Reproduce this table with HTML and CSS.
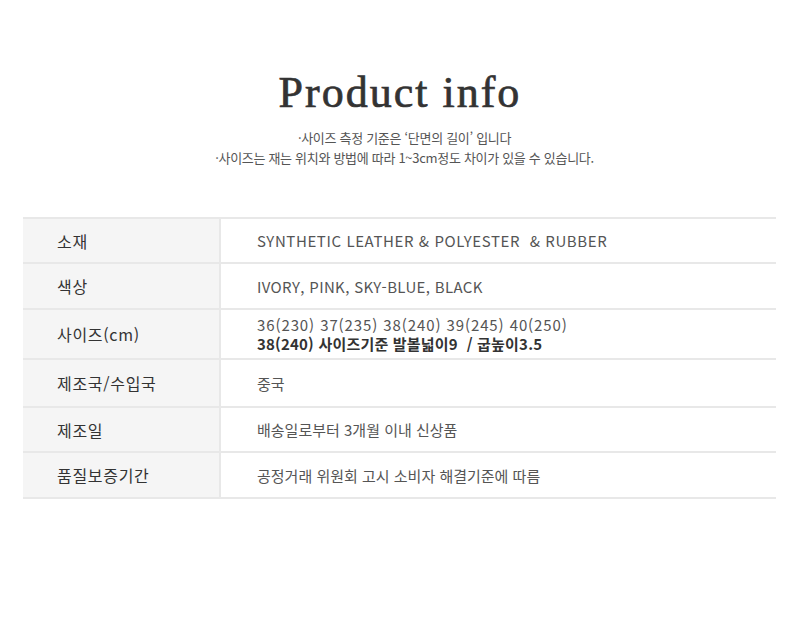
FILE: index.html
```html
<!DOCTYPE html>
<html lang="ko">
<head>
<meta charset="utf-8">
<link rel="stylesheet" href="styles.css">
</head>
<body>
<div class="page">
  <h1 class="title">Product info</h1>
  <div class="notes">
    <p>·사이즈 측정 기준은 ‘단면의 길이’ 입니다</p>
    <p>·사이즈는 재는 위치와 방법에 따라 1~3cm정도 차이가 있을 수 있습니다.</p>
  </div>
  <div class="spec">
    <div class="row">
      <div class="label">소재</div>
      <div class="value">SYNTHETIC LEATHER &amp; POLYESTER &nbsp;&amp; RUBBER</div>
    </div>
    <div class="row r2">
      <div class="label">색상</div>
      <div class="value narrow">IVORY, PINK, SKY-BLUE, BLACK</div>
    </div>
    <div class="row tall">
      <div class="label">사이즈(cm)</div>
      <div class="value two">
        <span class="sizes">36(230) 37(235) 38(240) 39(245) 40(250)</span>
        <strong>38(240) 사이즈기준 발볼넓이9 &nbsp;/ 굽높이3.5</strong>
      </div>
    </div>
    <div class="row mid">
      <div class="label">제조국/수입국</div>
      <div class="value ko">중국</div>
    </div>
    <div class="row">
      <div class="label">제조일</div>
      <div class="value ko">배송일로부터 3개월 이내 신상품</div>
    </div>
    <div class="row r2">
      <div class="label">품질보증기간</div>
      <div class="value ko">공정거래 위원회 고시 소비자 해결기준에 따름</div>
    </div>
  </div>
</div>
</body>
</html>
```

FILE: styles.css
```css
html, body {
  margin: 0;
  padding: 0;
  background: #fff;
}
.page {
  width: 800px;
  padding-top: 67px;
  font-family: "Noto Sans CJK KR", "Noto Sans", sans-serif;
}
.title {
  margin: 0;
  text-align: center;
  font-family: "Liberation Serif", serif;
  font-weight: normal;
  font-size: 44px;
  line-height: 52px;
  letter-spacing: 2px;
  color: #333;
  -webkit-text-stroke: 0.7px #333;
}
.notes {
  margin-top: 9px;
  padding-left: 9px;
  text-align: center;
  color: #555;
  font-size: 13px;
  letter-spacing: -0.3px;
}
.notes p {
  margin: 0;
  line-height: 20px;
}
.spec {
  margin: 49px 24px 0 23px;
  border-top: 2px solid #e8e8e8;
}
.row {
  display: grid;
  grid-template-columns: 198px 1fr;
  height: 43px;
  border-bottom: 2px solid #e8e8e8;
}
.row.r2 { height: 44px; }
.row.tall { height: 48px; }
.row.mid { height: 46px; }
.label {
  display: flex;
  align-items: center;
  padding-left: 34px;
  background: #f5f5f5;
  border-right: 2px solid #e8e8e8;
  font-size: 16px;
  color: #333;
  letter-spacing: 0.7px;
}
.value {
  display: flex;
  align-items: center;
  padding-left: 36px;
  font-size: 15px;
  color: #555;
  letter-spacing: 0.6px;
}
.value.narrow { letter-spacing: 0.35px; }
.value.ko { letter-spacing: 0; }
.value.two {
  flex-direction: column;
  align-items: flex-start;
  justify-content: center;
  line-height: 19px;
}
.value .sizes {
  letter-spacing: 0.9px;
}
.value.two strong {
  color: #333;
  font-weight: bold;
  letter-spacing: 0.2px;
}
```
